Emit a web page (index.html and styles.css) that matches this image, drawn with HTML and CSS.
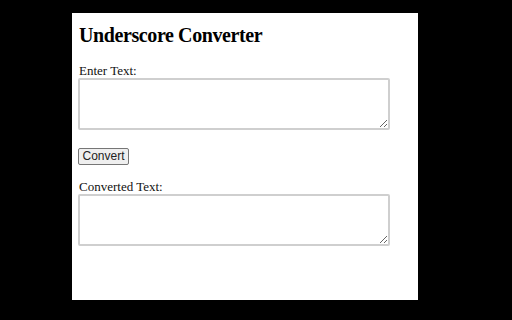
FILE: index.html
```html
<!DOCTYPE html>
<html>
<head>
<meta charset="utf-8">
<link rel="stylesheet" href="styles.css">
</head>
<body>
<div class="panel">
  <h2 class="title">Underscore Converter</h2>
  <label class="label" for="input">Enter Text:</label>
  <textarea id="input" class="box"></textarea>
  <button class="btn">Convert</button>
  <label class="label second" for="output">Converted Text:</label>
  <textarea id="output" class="box"></textarea>
</div>
</body>
</html>
```
FILE: styles.css
```css
html, body {
  margin: 0;
  padding: 0;
  background: #000;
  height: 100%;
}
body {
  padding-top: 13px;
  box-sizing: border-box;
}
.panel {
  margin-left: 72px;
  width: 346px;
  height: 287px;
  background: #fff;
  box-sizing: border-box;
  padding: 11px 6px 0 6px;
  display: flex;
  flex-direction: column;
  align-items: flex-start;
  font-family: "Liberation Serif", "Times New Roman", serif;
  color: #000;
}
.title {
  margin: 0 0 16px 1px;
  font-size: 20px;
  line-height: 23px;
  font-weight: bold;
  letter-spacing: -0.4px;
}
.label {
  display: block;
  font-size: 13px;
  line-height: 15px;
  margin: 0 0 0 1px;
  color: #111;
}
.label.second {
  margin-top: 14px;
}
.box {
  width: 312px;
  height: 52px;
  box-sizing: border-box;
  margin: 0;
  border: 2px solid #cfcfcf;
  border-radius: 2px;
  background: #fff;
  resize: both;
}
.btn {
  margin-top: 18px;
  width: 51px;
  height: 17px;
  padding: 0;
  font-family: "Liberation Sans", Arial, sans-serif;
  font-size: 12px;
  line-height: 15px;
  color: #222;
  background: #efefef;
  border: 1px solid #767676;
  border-radius: 2px;
}
```
